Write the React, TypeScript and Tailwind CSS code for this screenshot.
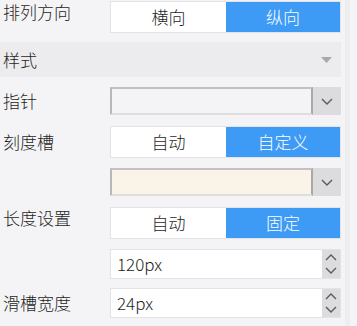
import React from "react";

const font = { fontFamily: '"Noto Sans CJK SC", "Noto Sans", sans-serif' };

function Toggle({ left, right, active }: { left: string; right: string; active: "left" | "right" }) {
  return (
    <div className="flex h-[32px] w-[231px] border border-[#e3e3e5] bg-white text-[17px]">
      <div
        className={
          active === "left"
            ? "flex flex-1 items-center justify-center bg-[#3d9bf6] text-white"
            : "flex w-[115px] items-center justify-center text-[#1e1e1e]"
        }
      >
        {left}
      </div>
      <div
        className={
          active === "right"
            ? "flex flex-1 items-center justify-center bg-[#3d9bf6] text-white"
            : "flex flex-1 items-center justify-center text-[#1e1e1e]"
        }
      >
        {right}
      </div>
    </div>
  );
}

function Chevron({ up = false, className = "" }: { up?: boolean; className?: string }) {
  return (
    <svg width="12" height="7" viewBox="0 0 12 7" className={className}>
      <path
        d={up ? "M1 6 L6 1 L11 6" : "M1 1 L6 6 L11 1"}
        fill="none"
        stroke="#5a5a5a"
        strokeWidth="1.4"
      />
    </svg>
  );
}

function Select({ bg }: { bg: string }) {
  return (
    <div className="flex h-[28px] w-[231px]">
      <div
        className={`flex-1 border-2 border-t-[#c2c2c2] border-l-[#b8b8b8] border-r-[#a9a9a9] border-b-[#dedede] ${bg}`}
      />
      <div className="flex w-[28px] items-center justify-center bg-[#dcdcde]">
        <Chevron />
      </div>
    </div>
  );
}

function NumberInput({ value }: { value: string }) {
  return (
    <div className="flex h-[30px] w-[231px] border border-[#e3e3e5] bg-white">
      <div className="flex flex-1 items-center pl-[6px] text-[17px] text-[#1e1e1e]">{value}</div>
      <div className="flex w-[18px] flex-col items-center justify-center gap-[6px] bg-[#dcdcde]">
        <Chevron up />
        <Chevron />
      </div>
    </div>
  );
}

export default function App() {
  return (
    <div className="flex h-[326px] w-[357px] overflow-hidden bg-[#f4f4f6] font-light" style={font}>
      <div className="flex w-[341px] flex-col">
        {/* 排列方向 */}
        <div className="mt-[1px] flex items-start">
          <div className="w-[110px] pl-[3px] text-[17px] leading-[22px] text-[#1e1e1e]">排列方向</div>
          <Toggle left="横向" right="纵向" active="right" />
        </div>

        {/* 样式 header */}
        <div className="mt-[9px] flex h-[35px] items-center justify-between bg-[#ececee] pl-[3px] pr-[9px]">
          <span className="text-[17px] text-[#1e1e1e]">样式</span>
          <svg width="11" height="6" viewBox="0 0 11 6">
            <path d="M0 0 L11 0 L5.5 6 Z" fill="#a9a9ab" />
          </svg>
        </div>

        {/* 指针 */}
        <div className="mt-[10px] flex items-center">
          <div className="w-[110px] pl-[3px] text-[17px] text-[#1e1e1e]">指针</div>
          <Select bg="bg-[#f4f4f6]" />
        </div>

        {/* 刻度槽 */}
        <div className="mt-[11px] flex items-center">
          <div className="w-[110px] pl-[3px] text-[17px] text-[#1e1e1e]">刻度槽</div>
          <Toggle left="自动" right="自定义" active="right" />
        </div>

        {/* colour */}
        <div className="mt-[10px] flex items-center">
          <div className="w-[110px]" />
          <Select bg="bg-[#faf3e7]" />
        </div>

        {/* 长度设置 */}
        <div className="mt-[11px] flex items-start">
          <div className="w-[110px] pl-[3px] text-[17px] leading-[22px] text-[#1e1e1e]">长度设置</div>
          <Toggle left="自动" right="固定" active="right" />
        </div>

        {/* 120px */}
        <div className="mt-[10px] flex items-center">
          <div className="w-[110px]" />
          <NumberInput value="120px" />
        </div>

        {/* 滑槽宽度 */}
        <div className="mt-[9px] flex items-center">
          <div className="w-[110px] pl-[3px] text-[17px] text-[#1e1e1e]">滑槽宽度</div>
          <NumberInput value="24px" />
        </div>
      </div>

      {/* scrollbar track */}
      <div className="flex w-[16px] justify-start pl-[4px]">
        <div className="h-full w-[5px] bg-[#ededef]" />
      </div>
    </div>
  );
}
